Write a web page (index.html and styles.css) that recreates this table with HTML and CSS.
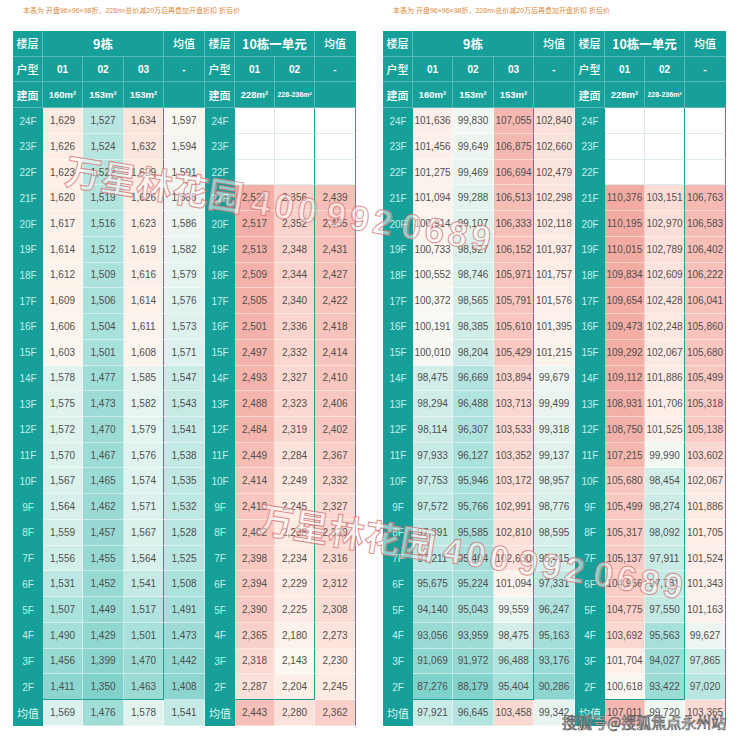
FILE: index.html
```html
<!DOCTYPE html>
<html lang="zh">
<head>
<meta charset="utf-8">
<title>万星林花园 价格表</title>
<link rel="stylesheet" href="styles.css">
</head>
<body>
<div class="page">
  <section class="panel">
    <p class="note">本表为 开盘96×96×98折，228m²总价减20万后再叠加开盘折扣 折后价</p>
    <div class="sheet" id="t1">
      <div class="c h lab">楼层</div><div class="c h big s3">9栋</div><div class="c h lab">均值</div><div class="c h lab">楼层</div><div class="c h big s2">10栋一单元</div><div class="c h lab last">均值</div>
      <div class="c h lab">户型</div><div class="c h">01</div><div class="c h">02</div><div class="c h">03</div><div class="c h">-</div><div class="c h lab">户型</div><div class="c h">01</div><div class="c h">02</div><div class="c h last">-</div>
      <div class="c h lab">建面</div><div class="c h area">160m²</div><div class="c h area">153m²</div><div class="c h area">153m²</div><div class="c h"></div><div class="c h lab">建面</div><div class="c h area">228m²</div><div class="c h tiny">228-236m²</div><div class="c h last"></div>
    </div>
  </section>
  <section class="panel">
    <p class="note">本表为 开盘96×96×98折，228m²总价减20万后再叠加开盘折扣 折后价</p>
    <div class="sheet" id="t2">
      <div class="c h lab">楼层</div><div class="c h big s3">9栋</div><div class="c h lab">均值</div><div class="c h lab">楼层</div><div class="c h big s2">10栋一单元</div><div class="c h lab last">均值</div>
      <div class="c h lab">户型</div><div class="c h">01</div><div class="c h">02</div><div class="c h">03</div><div class="c h">-</div><div class="c h lab">户型</div><div class="c h">01</div><div class="c h">02</div><div class="c h last">-</div>
      <div class="c h lab">建面</div><div class="c h area">160m²</div><div class="c h area">153m²</div><div class="c h area">153m²</div><div class="c h"></div><div class="c h lab">建面</div><div class="c h area">228m²</div><div class="c h tiny">228-236m²</div><div class="c h last"></div>
    </div>
  </section>
</div>
<div class="wm wm1">万星林花园 <span class="num">400 992 0689</span></div>
<div class="wm wm2">万星林花园 <span class="num">400 992 0689</span></div>
<div class="credit">搜狐号@搜狐焦点永州站</div>
<script src="script.js"></script>
</body>
</html>
```

FILE: styles.css
```css
* { box-sizing: border-box; }
html, body { margin: 0; padding: 0; background: #fff; }
body {
  width: 740px;
  height: 741px;
  overflow: hidden;
  position: relative;
  font-family: "Liberation Sans", "Noto Sans CJK SC", sans-serif;
}
.page { display: flex; }
.panel { width: 370px; padding: 6px 0 0 13px; }
.note {
  margin: 0 0 15px 10px;
  height: 10px;
  font-size: 7px;
  line-height: 10px;
  color: #dc8a3c;
  white-space: nowrap;
}
.sheet {
  display: grid;
  grid-template-columns: 30px 40px 41px 40px 41px 30px 40px 40px 41px;
  grid-template-rows: repeat(27, 25.74px);
  width: 343px;
}
.c {
  display: flex;
  align-items: center;
  justify-content: center;
  border-right: 1px solid transparent;
  border-bottom: 1px solid transparent;
  white-space: nowrap;
  overflow: hidden;
}
.h {
  background: #17a099;
  color: #fff;
  border-color: rgba(255, 255, 255, 0.28);
  font-size: 10px;
  font-weight: 700;
}
.lab { font-size: 11px; font-weight: 500; font-family: "Noto Sans CJK SC", sans-serif; }
.big { font-size: 12.5px; font-weight: 700; font-family: "Noto Sans CJK SC", sans-serif; }
.s3 { grid-column: span 3; }
.s2 { grid-column: span 2; }
.area { font-size: 9.5px; }
.tiny { font-size: 7px; }
.f {
  background: #17a099;
  color: #c3efea;
  font-size: 10px;
  border: none;
}
.favg { font-size: 11px; font-family: "Noto Sans CJK SC", sans-serif; color: #d6f5f1; }
.d {
  color: #4f4f4f;
  font-size: 10px;
  border-color: rgba(255, 255, 255, 0.45);
}
.e { background: #fff; border-color: #dcecea; }
.sep { border-right-color: #1a9e98; }
.end { border-bottom-color: #1a9e98; }
.last { border-right-color: #1a9e98; }

.wm {
  position: absolute;
  font-family: "Noto Sans CJK SC", sans-serif;
  font-weight: 700;
  font-size: 36px;
  line-height: 1;
  color: rgba(255, 255, 255, 0.5);
  -webkit-text-stroke: 1px rgba(210, 115, 115, 0.8);
  transform: rotate(9deg);
  transform-origin: 0 50%;
  white-space: nowrap;
  pointer-events: none;
}
.wm .num {
  font-family: "Liberation Sans", sans-serif;
  font-weight: 700;
  font-size: 35px;
  letter-spacing: 4px;
  word-spacing: -8px;
}
.wm1 { left: 66px; top: 150px; }
.wm2 { left: 258px; top: 498px; }
.credit {
  position: absolute;
  left: 562px;
  top: 714px;
  font-family: "Noto Sans CJK SC", sans-serif;
  font-size: 15px;
  line-height: 1;
  color: #fff;
  -webkit-text-stroke: 0.7px #555;
  white-space: nowrap;
}
```

FILE: script.js
```js
var floors = ['24F','23F','22F','21F','20F','19F','18F','17F','16F','15F','14F','13F','12F','11F','10F','9F','8F','7F','6F','5F','4F','3F','2F','均值'];

var L9 = [
[1629,1527,1634,1597],[1626,1524,1632,1594],[1623,1522,1629,1591],[1620,1519,1626,1588],
[1617,1516,1623,1586],[1614,1512,1619,1582],[1612,1509,1616,1579],[1609,1506,1614,1576],
[1606,1504,1611,1573],[1603,1501,1608,1571],[1578,1477,1585,1547],[1575,1473,1582,1543],
[1572,1470,1579,1541],[1570,1467,1576,1538],[1567,1465,1574,1535],[1564,1462,1571,1532],
[1559,1457,1567,1528],[1556,1455,1564,1525],[1531,1452,1541,1508],[1507,1449,1517,1491],
[1490,1429,1501,1473],[1456,1399,1470,1442],[1411,1350,1463,1408],[1569,1476,1578,1541]
];
var L10 = [null,null,null,
[2521,2356,2439],[2517,2352,2435],[2513,2348,2431],[2509,2344,2427],[2505,2340,2422],
[2501,2336,2418],[2497,2332,2414],[2493,2327,2410],[2488,2323,2406],[2484,2319,2402],
[2449,2284,2367],[2414,2249,2332],[2410,2245,2327],[2402,2238,2320],[2398,2234,2316],
[2394,2229,2312],[2390,2225,2308],[2365,2180,2273],[2318,2143,2230],[2287,2204,2245],
[2443,2280,2362]
];
var R9 = [
[101636,99830,107055,102840],[101456,99649,106875,102660],[101275,99469,106694,102479],
[101094,99288,106513,102298],[100914,99107,106333,102118],[100733,98927,106152,101937],
[100552,98746,105971,101757],[100372,98565,105791,101576],[100191,98385,105610,101395],
[100010,98204,105429,101215],[98475,96669,103894,99679],[98294,96488,103713,99499],
[98114,96307,103533,99318],[97933,96127,103352,99137],[97753,95946,103172,98957],
[97572,95766,102991,98776],[97391,95585,102810,98595],[97211,95404,102630,98415],
[95675,95224,101094,97331],[94140,95043,99559,96247],[93056,93959,98475,95163],
[91069,91972,96488,93176],[87276,88179,95404,90286],[97921,96645,103458,99342]
];
var R10 = [null,null,null,
[110376,103151,106763],[110195,102970,106583],[110015,102789,106402],[109834,102609,106222],
[109654,102428,106041],[109473,102248,105860],[109292,102067,105680],[109112,101886,105499],
[108931,101706,105318],[108750,101525,105138],[107215,99990,103602],[105680,98454,102067],
[105499,98274,101886],[105317,98092,101705],[105137,97911,101524],[104956,97731,101343],
[104775,97550,101163],[103692,95563,99627],[101704,94027,97865],[100618,93422,97020],
[107011,99720,103365]
];

var S_L9 = [[1350,'#7fd1ca'],[1450,'#95d9d2'],[1510,'#abe2dc'],[1550,'#cdece7'],[1575,'#e0f3ef'],[1600,'#fbf7f0'],[1625,'#fdeee6'],[1634,'#fce4da']];
var S_L10 = [[2143,'#fbf7f1'],[2250,'#fde9e2'],[2350,'#fad3cc'],[2450,'#f6bdb5'],[2521,'#f3aea6']];
var S_R = [[87276,'#7fd2cb'],[92000,'#93d9d2'],[96000,'#a9e1db'],[98500,'#d3eee9'],[100200,'#f9f9f4'],[101500,'#fdf0ea'],[103500,'#fbd9d2'],[105500,'#f9c8c1'],[107000,'#f5b7af'],[110376,'#f2aaa2']];

function hex(h) {
  return [parseInt(h.slice(1,3),16), parseInt(h.slice(3,5),16), parseInt(h.slice(5,7),16)];
}
function scale(v, stops) {
  if (v <= stops[0][0]) return stops[0][1];
  for (var i = 1; i < stops.length; i++) {
    if (v <= stops[i][0]) {
      var v0 = stops[i-1][0], v1 = stops[i][0];
      var a = hex(stops[i-1][1]), b = hex(stops[i][1]);
      var t = (v - v0) / (v1 - v0);
      return 'rgb(' + a.map(function (x, k) { return Math.round(x + (b[k] - x) * t); }).join(',') + ')';
    }
  }
  return stops[stops.length-1][1];
}
function fmt(v) { return v.toLocaleString('en-US'); }
function add(el, cls, text, bg) {
  var d = document.createElement('div');
  d.className = cls;
  d.textContent = text;
  if (bg) d.style.background = bg;
  el.appendChild(d);
}
function build(id, d9, d10, s9, s10) {
  var el = document.getElementById(id);
  var n = floors.length;
  floors.forEach(function (fl, i) {
    var last = i === n - 1;
    add(el, 'c f' + (last ? ' favg' : ''), fl);
    d9[i].forEach(function (v, j) {
      var cls = 'c d';
      if (!last && j === 2) cls += ' sep';
      if (i === n - 2 && j < 3) cls += ' end';
      add(el, cls, fmt(v), scale(v, s9));
    });
    add(el, 'c f' + (last ? ' favg' : ''), fl);
    var row = d10[i];
    for (var j = 0; j < 3; j++) {
      var cls = 'c ' + (row ? 'd' : 'e');
      if (!last && j === 1) cls += ' sep';
      if (i === n - 2 && j < 2) cls += ' end';
      if (j === 2) cls += ' last';
      add(el, cls, row ? fmt(row[j]) : '', row ? scale(row[j], s10) : null);
    }
  });
}
build('t1', L9, L10, S_L9, S_L10);
build('t2', R9, R10, S_R, S_R);
```
